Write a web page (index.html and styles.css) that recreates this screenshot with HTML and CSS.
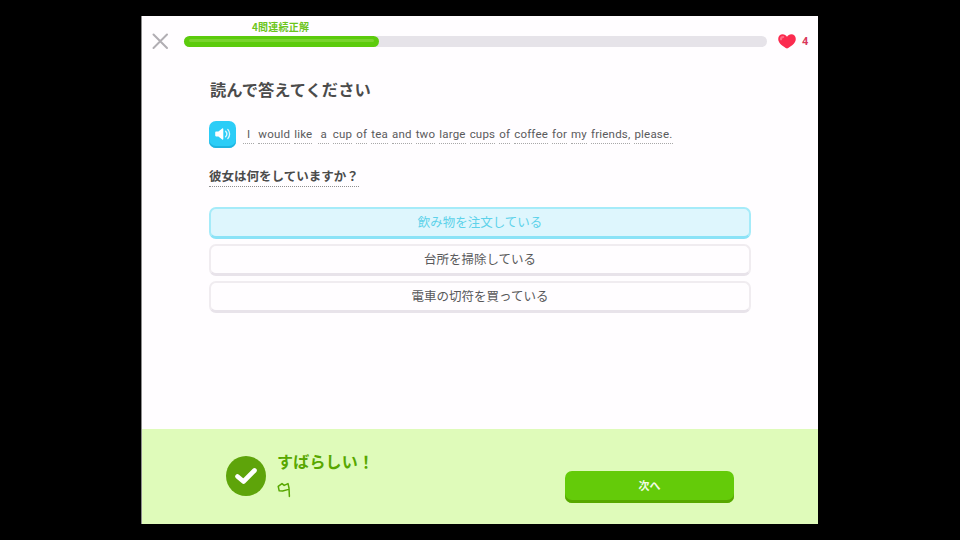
FILE: index.html
```html
<!DOCTYPE html>
<html lang="ja">
<head>
<meta charset="utf-8">
<title>読んで答えてください</title>
<link rel="stylesheet" href="styles.css">
</head>
<body>
<div class="app">
  <header class="top">
    <svg class="close" width="18" height="18" viewBox="0 0 18 18"><path d="M2.5 2.5L16 16M16 2.5L2.5 16" stroke="#b1aeb3" stroke-width="2" stroke-linecap="round" fill="none"/></svg>
    <div class="progress">
      <span class="streak">4問連続正解</span>
      <div class="track"><div class="fill"><div class="shine"></div></div></div>
    </div>
    <div class="hearts">
      <svg width="18" height="15" viewBox="0 0 18 15"><path d="M9 14.6C6 12.8.2 9.6.2 4.9.2 2.2 2.2.3 4.7.3 6.5.3 8 1.2 9 2.7 10 1.2 11.5.3 13.3.3c2.5 0 4.5 1.9 4.5 4.6 0 4.7-5.8 7.9-8.8 9.7z" fill="#fb2b4f"/><path d="M3 5.3c0-1.3 1-2.3 2.2-2.3" stroke="#fd6a83" stroke-width="2.2" stroke-linecap="round" fill="none"/></svg>
      <span class="count">4</span>
    </div>
  </header>
  <main class="lesson">
    <h1 class="title">読んで答えてください</h1>
    <div class="sentence">
      <button class="speaker" type="button" aria-label="再生">
        <svg width="16" height="14" viewBox="0 0 16 14"><path d="M1 4.6h2.4L7.2 1.4c.5-.4 1.1-.1 1.1.5v10.2c0 .6-.6.9-1.1.5L3.4 9.4H1c-.5 0-.8-.3-.8-.8V5.4c0-.5.3-.8.8-.8z" fill="#fff"/><path d="M10.6 4.2c1.5 1.6 1.5 4 0 5.6M12.8 2.4c2.4 2.6 2.4 6.6 0 9.2" stroke="#fff" stroke-width="1.3" stroke-linecap="round" fill="none" opacity=".85"/></svg>
      </button>
      <p class="words">
        <span class="w w-i">I</span><span class="w">would</span><span class="w">like</span><span class="w w-a">a</span><span class="w">cup</span><span class="w">of</span><span class="w">tea</span><span class="w">and</span><span class="w">two</span><span class="w">large</span><span class="w">cups</span><span class="w">of</span><span class="w">coffee</span><span class="w">for</span><span class="w">my</span><span class="w">friends,</span><span class="w">please.</span>
      </p>
    </div>
    <h2 class="question"><span class="question-text">彼女は何をしていますか？</span></h2>
    <div class="choices">
      <button class="choice selected" type="button">飲み物を注文している</button>
      <button class="choice" type="button">台所を掃除している</button>
      <button class="choice" type="button">電車の切符を買っている</button>
    </div>
  </main>
  <footer class="result">
    <div class="verdict">
      <div class="badge">
        <svg width="24" height="18" viewBox="0 0 24 18"><path d="M3.5 9.5L9.5 14.5L20.5 3.5" stroke="#fff" stroke-width="4.6" stroke-linecap="round" stroke-linejoin="round" fill="none"/></svg>
      </div>
      <div class="verdict-text">
        <div class="great">すばらしい！</div>
        <svg class="mark" width="14" height="16" viewBox="0 0 14 16"><path d="M1.2 4.4L5 1.6 7.2 3.4 11 1.6 12 6 12.4 14.4M11.6 7.4L5.6 9 2.2 8.8 1.2 4.4" stroke="#58a700" stroke-width="1.5" stroke-linejoin="round" stroke-linecap="round" fill="none"/></svg>
      </div>
    </div>
    <button class="next" type="button">次へ</button>
  </footer>
</div>
</body>
</html>
```
FILE: styles.css
```css
* { box-sizing: border-box; }
html, body { margin: 0; height: 100%; }
body {
  background: #000;
  display: flex;
  justify-content: center;
  padding: 16px 1px 0 0;
  font-family: "Noto Sans CJK JP", "Noto Sans", sans-serif;
}
.app {
  width: 677px;
  height: 508px;
  background: #fffdff;
  border-left: 1px solid #8d8d8d;
  display: flex;
  flex-direction: column;
}
.top {
  display: flex;
  align-items: flex-start;
  height: 57px;
  padding-left: 9px;
  flex: none;
}
.close { margin-top: 16px; flex: none; }
.progress { margin-left: 15px; width: 583px; flex: none; }
.streak {
  display: block;
  margin-left: 68px;
  height: 20px;
  padding-top: 3px;
  font-size: 10px;
  line-height: 16px;
  letter-spacing: .2px;
  font-weight: 700;
  color: #6cc51a;
}
.track {
  height: 11px;
  background: #e6e3e9;
  border-radius: 6px;
}
.fill {
  width: 195px;
  height: 11px;
  background: #5ccb0c;
  border-radius: 6px;
  padding: 3px 5px 0;
}
.shine { height: 3px; background: #79d42e; border-radius: 2px; }
.hearts {
  display: flex;
  align-items: center;
  margin: 18px 0 0 11px;
  gap: 6px;
}
.count {
  font-family: "Roboto", sans-serif;
  font-size: 11px;
  font-weight: 700;
  color: #d9365a;
}
.lesson {
  flex: 1;
  padding: 0 67px;
}
.title {
  margin: 4px 0 0;
  padding-left: 1px;
  font-size: 16.3px;
  line-height: 24px;
  font-weight: 700;
  color: #4b4b4b;
}
.sentence {
  display: flex;
  align-items: flex-start;
  margin-top: 20px;
  height: 28px;
}
.speaker {
  width: 27px;
  height: 27px;
  padding: 0 0 2px;
  border: 0;
  border-radius: 7px;
  background: #2ccdf7;
  box-shadow: inset 0 -2px 0 #1fb4e0;
  display: flex;
  align-items: center;
  justify-content: center;
  flex: none;
}
.words {
  margin: 6px 0 0 7px;
  display: flex;
  gap: 4px;
  font-family: "Roboto", sans-serif;
  font-size: 11.5px;
  line-height: 14px;
  letter-spacing: .2px;
  color: #5a5a5c;
}
.w {
  display: block;
  padding: 0 0 2px;
  border-bottom: 1px dotted #a8a8a8;
}
.w-i { padding: 0 4px 2px; }
.w-a { padding: 0 2px 2px; margin-left: 2px; }
.question {
  margin: 18px 0 0;
  font-size: 12.5px;
  line-height: 17px;
  font-weight: 700;
  color: #4b4b4b;
}
.question-text {
  display: inline-block;
  border-bottom: 1px dotted #8f8f8f;
  padding-bottom: 2px;
}
.choices {
  display: flex;
  flex-direction: column;
  gap: 5px;
  margin-top: 20px;
}
.choice {
  height: 32px;
  padding: 0 0 2px;
  border: 2px solid #f0ecf0;
  border-bottom-width: 3px;
  border-bottom-color: #e8e3ea;
  border-radius: 7px;
  background: #fffdff;
  font-family: "Noto Sans CJK JP", sans-serif;
  font-size: 12.5px;
  color: #58585a;
}
.selected {
  background: #def6fd;
  border-color: #a5ebf9;
  border-bottom-color: #8be3f7;
  color: #5dd2ea;
}
.result {
  flex: none;
  height: 95px;
  background: #dffbba;
  display: flex;
  align-items: flex-start;
  padding-left: 84px;
}
.verdict { display: flex; width: 339px; padding-top: 22px; }
.badge {
  width: 40px;
  height: 40px;
  margin-top: 5px;
  border-radius: 50%;
  background: #5ea40a;
  display: flex;
  align-items: center;
  justify-content: center;
}
.verdict-text { margin-left: 11px; }
.great {
  margin-top: -1px;
  font-size: 16px;
  line-height: 22px;
  font-weight: 700;
  letter-spacing: .2px;
  color: #58a700;
}
.mark { display: block; margin-top: 10px; }
.next {
  width: 169px;
  height: 32px;
  margin-top: 42px;
  border: 0;
  border-radius: 7px;
  background: #64cb09;
  box-shadow: inset 0 -3px 0 #58a700;
  padding: 0 0 5px;
  font-family: "Noto Sans CJK JP", sans-serif;
  font-size: 11px;
  font-weight: 700;
  color: #f2fbe6;
}
```
